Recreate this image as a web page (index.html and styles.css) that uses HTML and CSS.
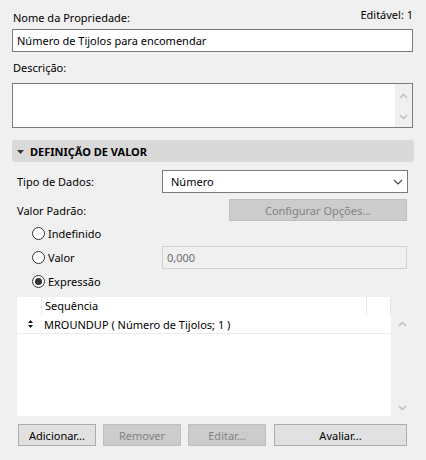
FILE: index.html
```html
<!DOCTYPE html>
<html lang="pt">
<head>
  <meta charset="UTF-8">
  <meta name="viewport" content="width=device-width, initial-scale=1.0">
  <title>Propriedade</title>
  <link rel="stylesheet" href="styles.css">
</head>
<body>
  <div class="panel">
    <!-- Name -->
    <div class="field-head">
      <label class="label" for="prop-name">Nome da Propriedade:</label>
      <span class="editable">Editável: 1</span>
    </div>
    <input id="prop-name" class="text-input" type="text" value="Número de Tijolos para encomendar">

    <!-- Description -->
    <div class="label desc-label">Descrição:</div>
    <div class="textarea">
      <div class="textarea-body"></div>
      <div class="scrollbar">
        <svg width="9" height="6" viewBox="0 0 9 6"><path d="M1 5 L4.5 1.5 L8 5" fill="none" stroke="#c2c2c2" stroke-width="1.6"/></svg>
        <svg width="9" height="6" viewBox="0 0 9 6"><path d="M1 1 L4.5 4.5 L8 1" fill="none" stroke="#c2c2c2" stroke-width="1.6"/></svg>
      </div>
    </div>

    <!-- Value definition section -->
    <div class="section-head">
      <svg class="caret" width="7" height="4" viewBox="0 0 7 4"><path d="M0 0 H7 L3.5 4 Z" fill="#333"/></svg>
      <span>DEFINIÇÃO DE VALOR</span>
    </div>

    <div class="row type-row">
      <span class="row-label">Tipo de Dados:</span>
      <div class="select">
        <span>Número</span>
        <svg width="10" height="6" viewBox="0 0 10 6"><path d="M1 1 L5 5 L9 1" fill="none" stroke="#444" stroke-width="1.1"/></svg>
      </div>
    </div>

    <div class="row default-row">
      <span class="row-label">Valor Padrão:</span>
      <button class="btn btn-disabled config-btn">Configurar Opções...</button>
    </div>

    <div class="radio-row">
      <span class="radio"></span>
      <span class="radio-label">Indefinido</span>
    </div>
    <div class="radio-row">
      <span class="radio"></span>
      <span class="radio-label">Valor</span>
      <div class="value-input">0,000</div>
    </div>
    <div class="radio-row">
      <span class="radio checked"></span>
      <span class="radio-label">Expressão</span>
    </div>

    <!-- Expression list -->
    <div class="list">
      <div class="list-head">
        <div class="col col-icon"></div>
        <div class="col col-seq">Sequência</div>
        <div class="col col-end"></div>
      </div>
      <div class="list-main">
        <div class="list-body">
          <div class="list-row">
            <svg class="sort" width="5" height="8" viewBox="0 0 5 8"><path d="M2.5 0 L5 3 H0 Z M0 5 H5 L2.5 8 Z" fill="#111"/></svg>
            <span>MROUNDUP ( Número de Tijolos; 1 )</span>
          </div>
        </div>
        <div class="scrollbar list-scroll">
          <svg width="9" height="6" viewBox="0 0 9 6"><path d="M1 5 L4.5 1.5 L8 5" fill="none" stroke="#c2c2c2" stroke-width="1.6"/></svg>
          <svg width="9" height="6" viewBox="0 0 9 6"><path d="M1 1 L4.5 4.5 L8 1" fill="none" stroke="#c2c2c2" stroke-width="1.6"/></svg>
        </div>
      </div>
    </div>

    <div class="actions">
      <button class="btn action">Adicionar...</button>
      <button class="btn btn-disabled action">Remover</button>
      <button class="btn btn-disabled action">Editar...</button>
      <button class="btn action wide">Avaliar...</button>
    </div>
  </div>
</body>
</html>
```

FILE: styles.css
```css
/* Global */
body {
  margin: 0;
  background-color: #f0f0f0;
  font-family: 'Noto Sans', 'Open Sans', sans-serif;
  font-size: 11px;
  color: #000;
}

.panel {
  width: 426px;
  height: 460px;
  padding: 9px 12px 0 12px;
  box-sizing: border-box;
}

.label {
  display: block;
  line-height: 16px;
  padding-left: 1px;
}

/* Name field */
.field-head {
  display: flex;
  justify-content: space-between;
  height: 20px;
}

.field-head .label {
  padding-top: 1px;
}

.editable {
  line-height: 16px;
  margin-top: -2px;
  padding-right: 1px;
}

.text-input {
  display: block;
  width: 401px;
  height: 23px;
  margin: 0;
  padding: 0 0 0 4px;
  box-sizing: border-box;
  border: 1px solid #7a7a7a;
  background: #fff;
  font: inherit;
  color: #000;
}

.desc-label {
  margin-top: 8px;
}

.textarea {
  display: flex;
  width: 401px;
  height: 45px;
  margin-top: 7px;
  border: 1px solid #7a7a7a;
  box-sizing: border-box;
  background: #fff;
}

.textarea-body {
  flex: 1;
}

.scrollbar {
  width: 17px;
  background: #f0f0f0;
  display: flex;
  flex-direction: column;
  align-items: center;
  justify-content: space-between;
  padding: 9px 0 7px;
  box-sizing: border-box;
}

/* Section header */
.section-head {
  display: flex;
  align-items: center;
  width: 402px;
  height: 22px;
  margin-top: 12px;
  background: #d9d9d9;
  border-radius: 3px;
  font-weight: bold;
  font-size: 11px;
}

.section-head .caret {
  margin: 1px 6px 0 5px;
}

/* Rows */
.row {
  display: flex;
  align-items: center;
  padding-left: 5px;
}

.row-label {
  width: 145px;
}

.type-row {
  margin-top: 8px;
}

.select {
  display: flex;
  align-items: center;
  justify-content: space-between;
  width: 246px;
  height: 23px;
  padding: 0 4px 0 8px;
  box-sizing: border-box;
  border: 1px solid #7a7a7a;
  background: #fff;
}

.default-row {
  margin-top: 6px;
}

.btn {
  height: 22px;
  margin: 0;
  padding: 0;
  border: 1px solid #adadad;
  background: #e1e1e1;
  font: inherit;
  color: #000;
}

.btn-disabled {
  background: #cccccc;
  border-color: #bfbfbf;
  color: #838383;
}

.config-btn {
  width: 178px;
  margin-left: 67px;
}

/* Radios */
.radio-row {
  display: flex;
  align-items: center;
  height: 24px;
  padding-left: 20px;
}

.radio {
  width: 13px;
  height: 13px;
  box-sizing: border-box;
  border: 1px solid #333;
  border-radius: 50%;
  background: #fff;
  margin-right: 3px;
  display: flex;
  align-items: center;
  justify-content: center;
}

.radio.checked::after {
  content: '';
  width: 7px;
  height: 7px;
  border-radius: 50%;
  background: #333;
}

.radio-label {
  width: 114px;
}

.value-input {
  width: 245px;
  height: 23px;
  padding-left: 4px;
  box-sizing: border-box;
  border: 1px solid #d0d0d0;
  line-height: 21px;
  color: #6d6d6d;
}

/* Expression list */
.list {
  margin: 4px 0 0 5px;
  width: 396px;
}

.list-head {
  display: flex;
  width: 374px;
  height: 18px;
  background: #fff;
  line-height: 18px;
}

.col {
  border-right: 1px solid #e5e5e5;
  box-sizing: border-box;
}

.col-icon {
  width: 25px;
}

.col-seq {
  width: 325px;
  padding-left: 3px;
}

.col-end {
  width: 24px;
}

.list-main {
  display: flex;
  height: 101px;
}

.list-body {
  width: 374px;
  background: #fff;
}

.list-row {
  display: flex;
  align-items: center;
  height: 19px;
  border-bottom: 1px solid #ececec;
  box-sizing: border-box;
}

.list-row .sort {
  margin: 0 11px 0 11px;
}

.list-scroll {
  width: 22px;
  padding: 6px 0 5px;
}

/* Bottom buttons */
.actions {
  display: flex;
  gap: 7px;
  margin: 8px 0 0 6px;
}

.action {
  width: 78px;
}

.action.wide {
  width: 133px;
  margin-left: 1px;
}
```
